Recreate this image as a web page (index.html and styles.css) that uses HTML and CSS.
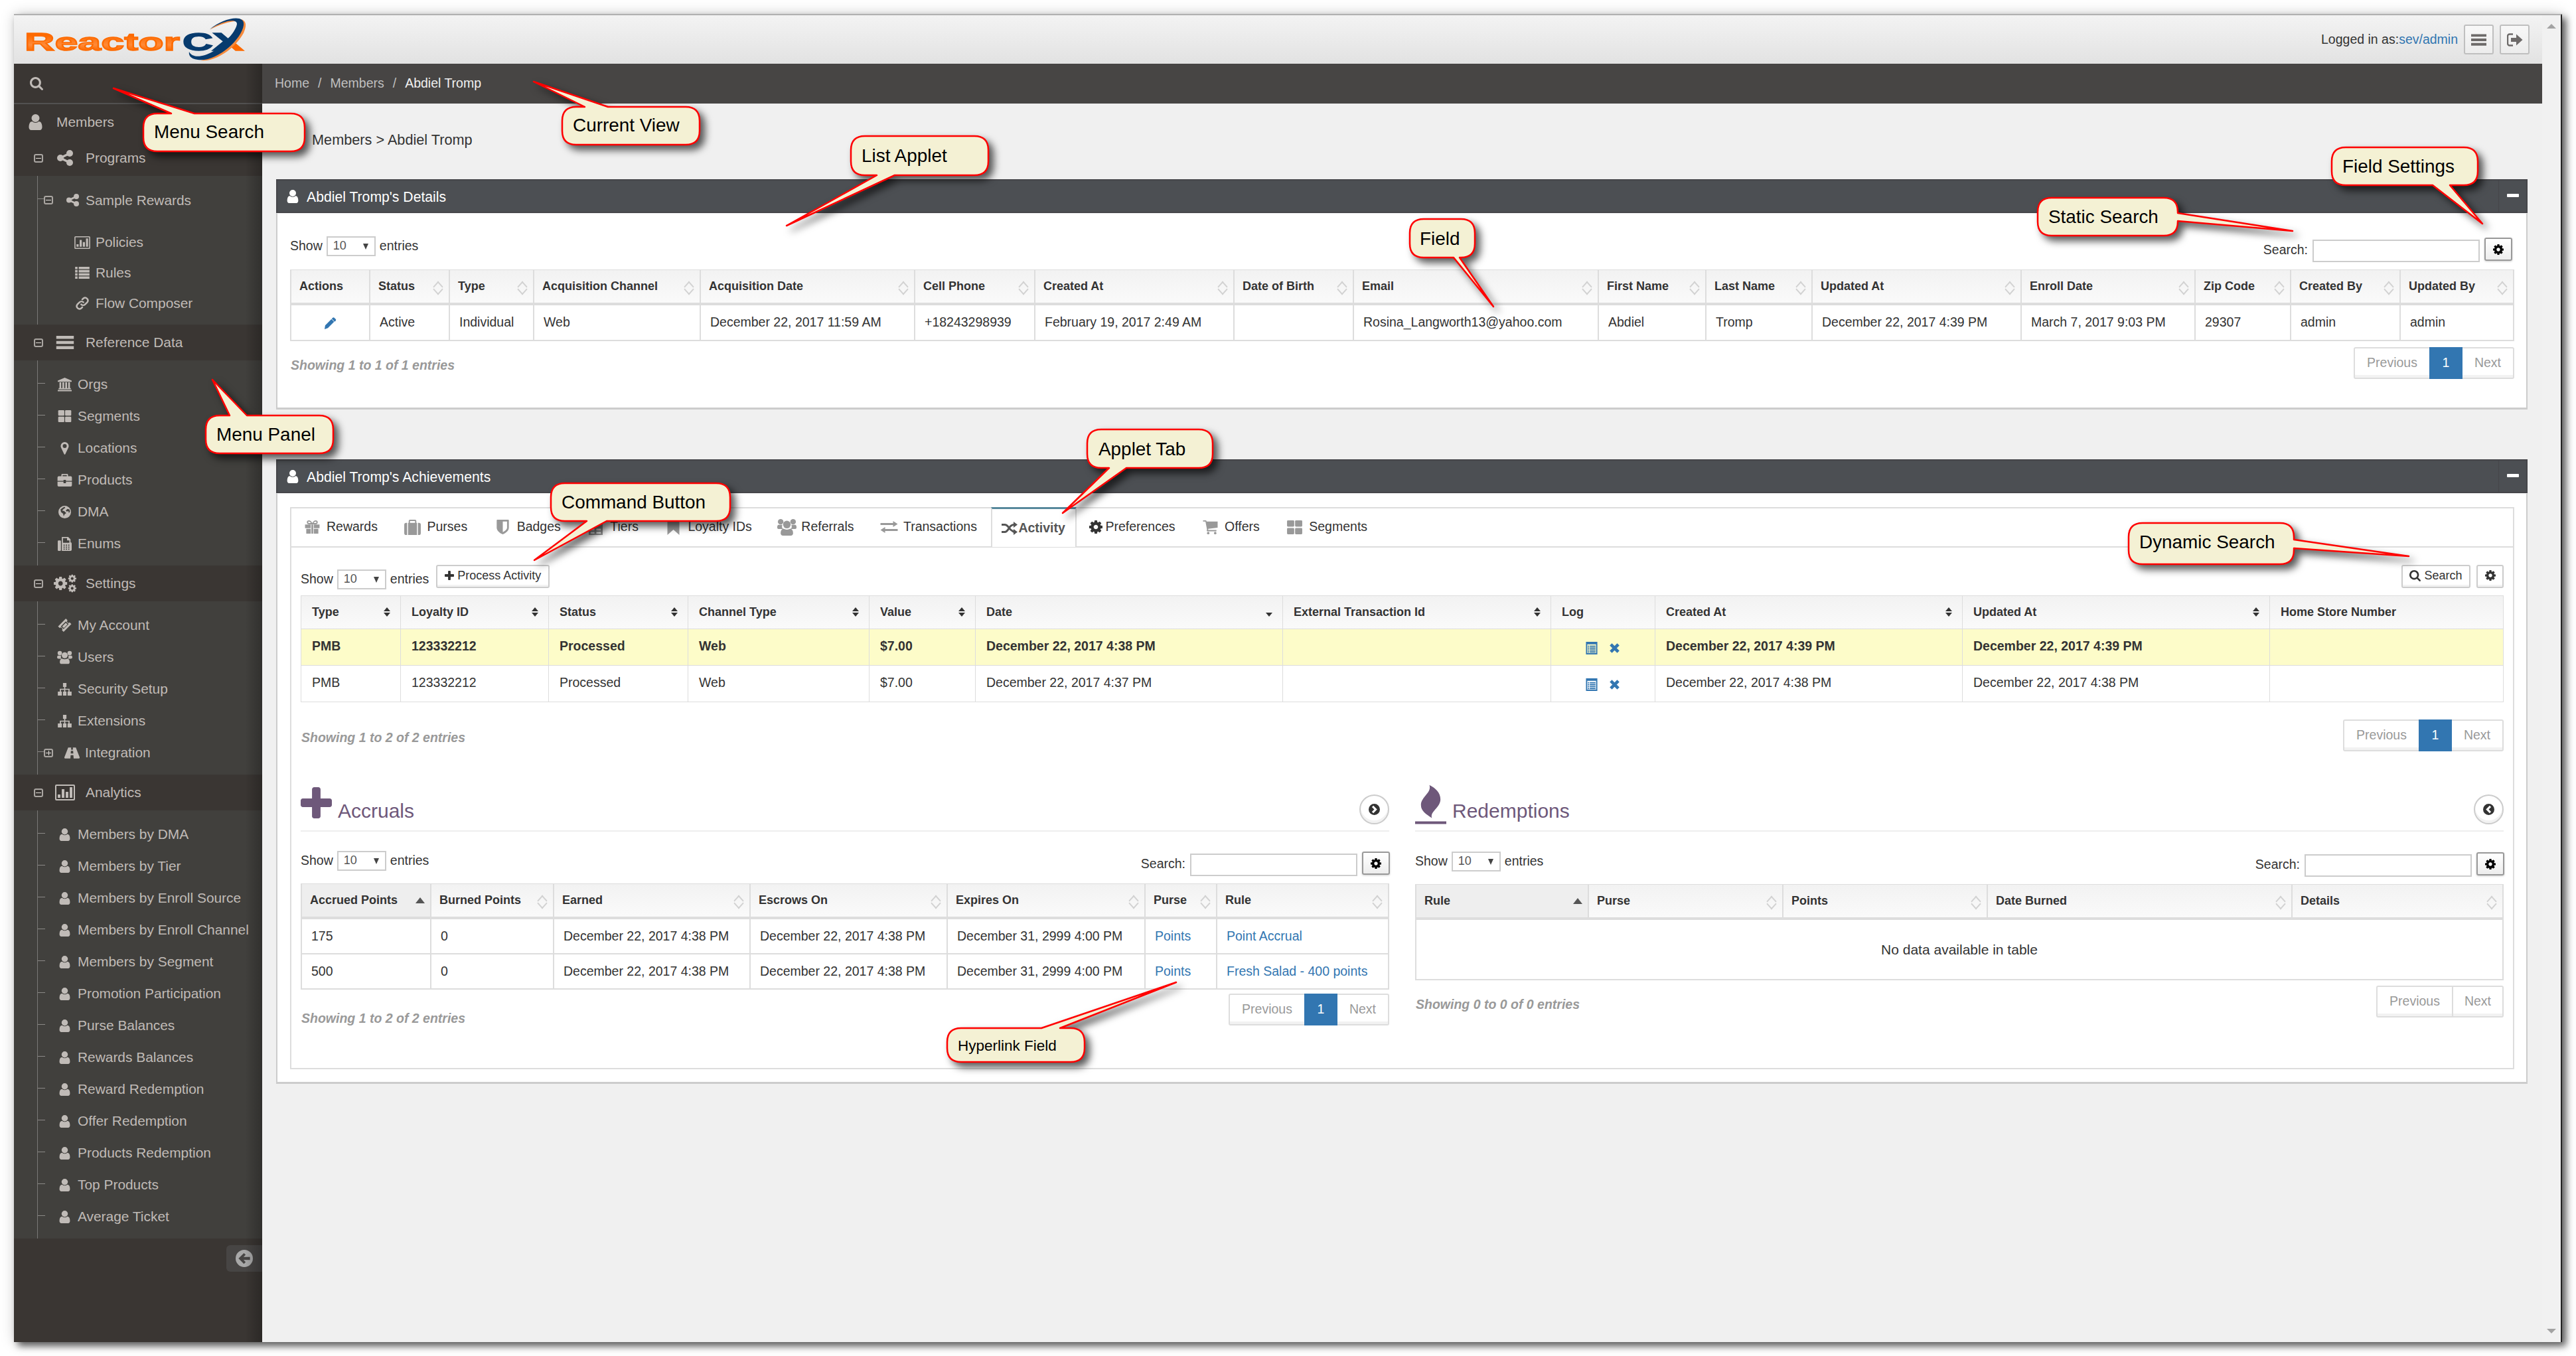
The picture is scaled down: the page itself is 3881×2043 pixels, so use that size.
FILE: index.html
```html
<!DOCTYPE html>
<html lang="en">
<head>
    <meta charset="UTF-8">
    <meta name="viewport" content="width=device-width, initial-scale=1.0">
    <title>ReactorCX - Abdiel Tromp</title>
    <link rel="stylesheet" href="styles.css">
</head>
<body>
    <!-- icon set -->
    <svg class="sprite" width="0" height="0">
        <symbol id="user" viewBox="256 128 1280 1536"><path d="M1536 1399q0 109-62.5 187t-150.5 78h-854q-88 0-150.5-78t-62.5-187q0-85 8.5-160.5t31.5-152 58.5-131 94-89 134.5-34.5q131 128 313 128t313-128q76 0 134.5 34.5t94 89 58.5 131 31.5 152 8.5 160.5zm-256-887q0 159-112.5 271.5t-271.5 112.5-271.5-112.5-112.5-271.5 112.5-271.5 271.5-112.5 271.5 112.5 112.5 271.5z"/></symbol>
        <symbol id="cog" viewBox="128 128 1536 1536"><path d="M1152 896q0-106-75-181t-181-75-181 75-75 181 75 181 181 75 181-75 75-181zm512-109v222q0 12-8 23t-20 13l-185 28q-19 54-39 91 35 50 107 138 10 12 10 25t-9 23q-27 37-99 108t-94 71q-12 0-26-9l-138-108q-44 23-91 38-16 136-29 186-7 28-36 28h-222q-14 0-24.5-8.5t-11.5-21.5l-28-184q-49-16-90-37l-141 107q-10 9-25 9-14 0-25-11-126-114-165-168-7-10-7-23 0-12 8-23 15-21 51-66.5t54-70.5q-27-50-41-99l-183-27q-13-2-21-12.5t-8-23.5v-222q0-12 8-23t19-13l186-28q14-46 39-92-40-57-107-138-10-12-10-24 0-10 9-23 26-36 98.5-107.5t94.5-71.5q13 0 26 10l138 107q44-23 91-38 16-136 29-186 7-28 36-28h222q14 0 24.5 8.5t11.5 21.5l28 184q49 16 90 37l142-107q9-9 24-9 13 0 25 10 129 119 165 170 7 8 7 22 0 12-8 23-15 21-51 66.5t-54 70.5q26 50 41 98l183 28q13 2 21 12.5t8 23.5z"/></symbol>
        <symbol id="plus" viewBox="192 128 1408 1408"><path d="M1600 736v192q0 40-28 68t-68 28h-416v416q0 40-28 68t-68 28h-192q-40 0-68-28t-28-68v-416h-416q-40 0-68-28t-28-68v-192q0-40 28-68t68-28h416v-416q0-40 28-68t68-28h192q40 0 68 28t28 68v416h416q40 0 68 28t28 68z"/></symbol>
        <symbol id="search" viewBox="64 128 1664 1664"><path d="M1216 832q0-185-131.5-316.5t-316.5-131.5-316.5 131.5-131.5 316.5 131.5 316.5 316.5 131.5 316.5-131.5 131.5-316.5zm512 832q0 52-38 90t-90 38q-54 0-90-38l-343-342q-179 124-399 124-143 0-273.5-55.5t-225-150-150-225-55.5-273.5 55.5-273.5 150-225 225-150 273.5-55.5 273.5 55.5 225 150 150 225 55.5 273.5q0 220-124 399l343 343q37 37 37 90z"/></symbol>
        <symbol id="share" viewBox="0 0 24 24"><circle cx="5" cy="12" r="5"/><circle cx="19" cy="5" r="5"/><circle cx="19" cy="19" r="5"/><path d="M5 12L19 5M5 12l14 7" stroke="currentColor" stroke-width="3.4"/></symbol>
        <symbol id="chart" viewBox="0 0 30 24"><path fill-rule="evenodd" d="M2 0h26a2 2 0 0 1 2 2v20a2 2 0 0 1-2 2H2a2 2 0 0 1-2-2V2a2 2 0 0 1 2-2zm0 2v20h26V2zM4 15h4v5H4zM10 7h4v13h-4zM16 11h4v9h-4zM22 4h4v16h-4z"/></symbol>
        <symbol id="list" viewBox="0 0 24 20"><path d="M0 0h4v4H0zM6 0h18v4H6zM0 5.4h4v4H0zM6 5.4h18v4H6zM0 10.8h4v4H0zM6 10.8h18v4H6zM0 16.2h4v4H0zM6 16.2h18v4H6z"/></symbol>
        <symbol id="link" viewBox="0 0 24 24"><g fill="none" stroke="currentColor" stroke-width="3" stroke-linecap="round"><path d="M10 14a5 5 0 0 0 7 0l4-4a5 5 0 0 0-7-7l-2 2"/><path d="M14 10a5 5 0 0 0-7 0l-4 4a5 5 0 0 0 7 7l2-2"/></g></symbol>
        <symbol id="bars" viewBox="0 0 24 20"><path d="M0 1h24v4H0zM0 8h24v4H0zM0 15h24v4H0z"/></symbol>
        <symbol id="bank" viewBox="0 0 24 24"><path d="M12 0l12 5v2H0V5zM3 8h3v10h2V8h3v10h2V8h3v10h2V8h3v10h1.500v2h-21v-2H3zM0 21h24v2.500H0z"/></symbol>
        <symbol id="thlarge" viewBox="0 0 24 22"><rect width="11.300" height="10" rx="1.500"/><rect x="12.700" width="11.300" height="10" rx="1.500"/><rect y="12" width="11.300" height="10" rx="1.500"/><rect x="12.700" y="12" width="11.300" height="10" rx="1.500"/></symbol>
        <symbol id="marker" viewBox="0 0 14 22"><path fill-rule="evenodd" d="M7 0a7 7 0 0 1 7 7c0 2-1 3.500-1.500 4.500L8 21a1.200 1.200 0 0 1-2 0L1.500 11.500C1 10.500 0 9 0 7a7 7 0 0 1 7-7zm0 3.500a3.500 3.500 0 1 0 0 7 3.500 3.500 0 0 0 0-7z"/></symbol>
        <symbol id="briefcase" viewBox="0 0 24 21"><path fill-rule="evenodd" d="M8 0h8a1.500 1.500 0 0 1 1.500 1.500V4H22a2 2 0 0 1 2 2v5.500H14V10h-4v1.500H0V6a2 2 0 0 1 2-2h4.500V1.500A1.500 1.500 0 0 1 8 0zm.500 2v2h7V2zM0 13h10v2.500h4V13h10v6a2 2 0 0 1-2 2H2a2 2 0 0 1-2-2z"/></symbol>
        <symbol id="globe" viewBox="0 0 24 24"><path fill-rule="evenodd" d="M12 0a12 12 0 1 1 0 24 12 12 0 0 1 0-24zM9 3L4 7l1 5 4 3 1 5 2-4 3-2-4-4-4-1 3-3 3-2-1-2zm8 3l-3 3 2 2 3-1 1 4 2-3-1-4z"/></symbol>
        <symbol id="fax" viewBox="0 0 24 24"><path fill-rule="evenodd" d="M1.500 6H4a1.500 1.500 0 0 1 1.500 1.500v15A1.500 1.500 0 0 1 4 24H1.500A1.500 1.500 0 0 1 0 22.500v-15A1.500 1.500 0 0 1 1.500 6zM7 0h11l4 4v5a2 2 0 0 1 2 2v11a2 2 0 0 1-2 2H7zm2 2v8h11V6h-4V2zm1 11v2h2v-2zm4 0v2h2v-2zm4 0v2h2v-2zm-8 3.500v2h2v-2zm4 0v2h2v-2zm4 0v2h2v-2zM10 20v2h2v-2zm4 0v2h2v-2zm4 0v2h2v-2z"/></symbol>
        <symbol id="ticket" viewBox="0 0 24 24"><path fill-rule="evenodd" d="M14 0l3 3a2.500 2.500 0 0 0 4 4l3 3-14 14-3-3a2.500 2.500 0 0 0-4-4l-3-3zm0 5l-9 9 5 5 9-9zm0 2.500l3 3-6.500 6.500-3-3z"/></symbol>
        <symbol id="group" viewBox="0 0 28 24"><circle cx="5" cy="4" r="4"/><circle cx="23" cy="4" r="4"/><circle cx="14" cy="8" r="5.500"/><path d="M1.500 8.500h6q-1.500 4 1 6H3q-3 0-3-2.500 0-3 1.500-3.500zM26.500 8.500h-6q1.500 4-1 6H25q3 0 3-2.500 0-3-1.500-3.500zM9 14q5 2.500 10 0 4 1 4 6.500 0 3.500-3.500 3.500h-11Q5 24 5 20.500 5 15 9 14z"/></symbol>
        <symbol id="sitemap" viewBox="0 0 24 22"><path d="M9 0h6v7h-2v3h7.500v5H24v7h-7v-7h1.500v-3H13v3h2v7H9v-7h2v-3H5.500v3H7v7H0v-7h3.500v-5H11V7H9z"/></symbol>
        <symbol id="road" viewBox="0 0 28 20"><path fill-rule="evenodd" d="M7 0h5.500l-.300 4h3.600l-.300-4H21l7 18q.500 2-1.500 2H17l-.500-6h-5L11 20H1.500q-2 0-1.500-2zM12 6l-.400 5h4.800L16 6z"/></symbol>
        <symbol id="cogs" viewBox="0 0 30 24"><use href="#cog" x="0" y="3" width="18" height="18"/><use href="#cog" x="19" y="0" width="11" height="11"/><use href="#cog" x="19" y="13" width="11" height="11"/></symbol>
        <symbol id="gift" viewBox="0 0 24 22"><path fill-rule="evenodd" d="M0 7h9.500v6H0zM14.500 7H24v6h-9.500zM10.500 7h3v15h-3zM2 14h7.500v8H2zM14.500 14H22v8h-7.500zM6.500 0Q9.500 0 12 4.500 14.500 0 17.500 0 21 0 21 3q0 3.500-4 3.500H7Q3 6.500 3 3q0-3 3.500-3zm0 2Q5 2 5 3.300 5 4.500 7 4.500h3Q8 2 6.500 2zm11 0Q16 2 14 4.500h3q2 0 2-1.200Q19 2 17.500 2z"/></symbol>
        <symbol id="suitcase" viewBox="0 0 26 24"><path fill-rule="evenodd" d="M9 0h8a2 2 0 0 1 2 2v3h1v19H6V5h1V2a2 2 0 0 1 2-2zm0 2v3h8V2zM3 5h1.500v19H3a3 3 0 0 1-3-3V8a3 3 0 0 1 3-3zM21.500 5H23a3 3 0 0 1 3 3v13a3 3 0 0 1-3 3h-1.500z"/></symbol>
        <symbol id="shield" viewBox="0 0 20 24"><path fill-rule="evenodd" d="M1 0h18a1 1 0 0 1 1 1v12c0 5-5 9-10 11C5 22 0 18 0 13V1a1 1 0 0 1 1-1zm9 3v17.500c3-1.500 7-4.500 7-7.500V3z"/></symbol>
        <symbol id="tiers" viewBox="0 0 22 24"><path fill-rule="evenodd" d="M0 0h22v24H0zM3 14v3h6v-3zm9 0v3h7v-3zm-9 5v3h6v-3zm9 0v3h7v-3z"/></symbol>
        <symbol id="bookmark" viewBox="0 0 18 23"><path d="M1 0h16a1 1 0 0 1 1 1v22l-9-8-9 8V1a1 1 0 0 1 1-1z"/></symbol>
        <symbol id="exchange" viewBox="0 0 26 18"><path d="M0 3h19V0l7 4.500L19 9V6H0zM26 15H7v3l-7-4.500L7 9v3h19z"/></symbol>
        <symbol id="random" viewBox="0 0 24 20"><path d="M0 4.500h4.500Q8 4.500 11 9t8 6.500M0 15.500h4.500Q8 15.500 11 10t8-5.500" fill="none" stroke="currentColor" stroke-width="3"/><path d="M18 0l6 4.500L18 9zM18 11l6 4.500-6 4.500z"/></symbol>
        <symbol id="cart" viewBox="0 0 24 24"><path d="M0 1h5l1 2h18v10L8.500 15v2H22v2H7q-1.500 0-.500-3L4 3H0z"/><circle cx="8.500" cy="22" r="2"/><circle cx="20" cy="22" r="2"/></symbol>
        <symbol id="pencil" viewBox="0 0 20 20"><path d="M1 13.500L11.500 3l4.500 4.500L5.500 18 0 20zM13 1.500q2-2 3.500-.500L18.500 3q1.500 1.500-.500 3.500l-1 1L12 2.500z"/></symbol>
        <symbol id="log" viewBox="0 0 18 20"><path fill-rule="evenodd" d="M0 0h18v20H0zM2 4v14h14V4zM3 6h2v2H3zM6 6h9v2H6zM3 9h2v2H3zM6 9h9v2H6zM3 12h2v2H3zM6 12h9v2H6zM3 15h2v2H3zM6 15h9v2H6z"/></symbol>
        <symbol id="times" viewBox="0 0 16 16"><path d="M2 2l12 12M14 2L2 14" stroke="currentColor" stroke-width="5"/></symbol>
        <symbol id="back" viewBox="0 0 24 24"><path fill-rule="evenodd" d="M12 0a12 12 0 1 1 0 24 12 12 0 0 1 0-24zM4 12l7.500 7.500 2.500-2.500-3-3h9v-4h-9l3-3-2.500-2.500z"/></symbol>
        <symbol id="next" viewBox="0 0 24 24"><path fill-rule="evenodd" d="M12 0a12 12 0 1 1 0 24 12 12 0 0 1 0-24zM10 4L7 7l5 5-5 5 3 3 8-8z"/></symbol>
        <symbol id="prev" viewBox="0 0 24 24"><path fill-rule="evenodd" d="M12 0a12 12 0 1 1 0 24 12 12 0 0 1 0-24zM14 4l3 3-5 5 5 5-3 3-8-8z"/></symbol>
        <symbol id="burn" viewBox="0 0 48 60"><path d="M22 0c4 12-13 18-13 31 0 9 8 14 17 20-4-10 13-16 13-29C39 12 32 5 22 0zM0 56h48v4H0z"/></symbol>
        <symbol id="signout" viewBox="0 0 24 20"><path d="M9 18.500H4a3 3 0 0 1-3-3v-11a3 3 0 0 1 3-3h5" fill="none" stroke="currentColor" stroke-width="2.400"/><path d="M6 7h8V1.500l9.500 8.500L14 18.500V13H6z"/></symbol>
    </svg>

    <div class="window">
        <header class="topbar">
            <svg class="logo" width="340" height="74" viewBox="0 0 340 74">
                <defs>
                    <linearGradient id="orange" x1="0" y1="0" x2="0" y2="1">
                        <stop offset=".25" stop-color="#fd6a00"/>
                        <stop offset=".6" stop-color="#ff8a38"/>
                        <stop offset=".8" stop-color="#fd6a00"/>
                    </linearGradient>
                    <linearGradient id="cx" x1="0" y1="0" x2="1" y2="1">
                        <stop offset=".5" stop-color="#073b6e"/>
                        <stop offset=".52" stop-color="#fd6a00"/>
                    </linearGradient>
                </defs>
                <text x="1" y="54" textLength="234" lengthAdjust="spacingAndGlyphs" fill="url(#orange)" stroke="#fd6a00" class="logo-text">Reactor</text>
                <text x="239" y="54" textLength="46" lengthAdjust="spacingAndGlyphs" fill="#073b6e" stroke="#073b6e" class="logo-text">C</text>
                <text x="284" y="54" textLength="47" lengthAdjust="spacingAndGlyphs" fill="url(#cx)" stroke="url(#cx)" class="logo-text">X</text>
                <path d="M280 23C302 5 337-1 334 18 331 40 293 73 266 69 290 66 326 34 327 14 326 6 302 11 280 23z" fill="#f58a3c"/>
                <path d="M280 22C300 5 334-2 331 16 328 38 290 72 262 68 250 67 248 60 249 56 254 66 270 64 284 56 304 44 320 24 321 14 321 5 300 9 280 22z" fill="#073b6e"/>
            </svg>
            <div class="user-info">
                <span>Logged in as:<a href="#">sev/admin</a></span>
                <button class="top-btn"><svg width="23" height="20"><use href="#bars"/></svg></button>
                <button class="top-btn"><svg width="24" height="20"><use href="#signout"/></svg></button>
            </div>
        </header>

        <div class="page">
            <nav class="sidebar">
                <div class="menu-search"><svg width="20" height="20"><use href="#search"/></svg></div>
                <div class="menu-head members"><svg width="23" height="24"><use href="#user"/></svg><span>Members</span></div>
                <div class="menu-head"><i class="toggle"></i><svg width="25" height="24"><use href="#share"/></svg><span>Programs</span></div>
                <ul class="submenu tree">
                    <li class="parent sample"><i class="toggle"></i><svg width="19" height="19"><use href="#share"/></svg>Sample Rewards</li>
                    <li class="leaf"><svg width="24" height="19"><use href="#chart"/></svg>Policies</li>
                    <li class="leaf"><svg width="24" height="18"><use href="#list"/></svg>Rules</li>
                    <li class="leaf"><svg width="24" height="20"><use href="#link"/></svg>Flow Composer</li>
                </ul>
                <div class="menu-head"><i class="toggle"></i><svg width="25" height="22"><use href="#bars"/></svg><span>Reference Data</span></div>
                <ul class="submenu">
                    <li><svg width="23" height="21"><use href="#bank"/></svg>Orgs</li>
                    <li><svg width="23" height="18"><use href="#thlarge"/></svg>Segments</li>
                    <li><svg width="23" height="19"><use href="#marker"/></svg>Locations</li>
                    <li><svg width="23" height="19"><use href="#briefcase"/></svg>Products</li>
                    <li><svg width="23" height="19"><use href="#globe"/></svg>DMA</li>
                    <li><svg width="23" height="21"><use href="#fax"/></svg>Enums</li>
                </ul>
                <div class="menu-head"><i class="toggle"></i><svg width="30" height="28"><use href="#cogs"/></svg><span>Settings</span></div>
                <ul class="submenu">
                    <li><svg width="23" height="20"><use href="#ticket"/></svg>My Account</li>
                    <li><svg width="23" height="21"><use href="#group"/></svg>Users</li>
                    <li><svg width="23" height="19"><use href="#sitemap"/></svg>Security Setup</li>
                    <li><svg width="23" height="19"><use href="#sitemap"/></svg>Extensions</li>
                    <li class="parent"><i class="toggle closed"></i><svg width="23" height="17"><use href="#road"/></svg>Integration</li>
                </ul>
                <div class="menu-head"><i class="toggle"></i><svg width="30" height="24"><use href="#chart"/></svg><span>Analytics</span></div>
                <ul class="submenu">
                    <li><svg width="23" height="19"><use href="#user"/></svg>Members by DMA</li>
                    <li><svg width="23" height="19"><use href="#user"/></svg>Members by Tier</li>
                    <li><svg width="23" height="19"><use href="#user"/></svg>Members by Enroll Source</li>
                    <li><svg width="23" height="19"><use href="#user"/></svg>Members by Enroll Channel</li>
                    <li><svg width="23" height="19"><use href="#user"/></svg>Members by Segment</li>
                    <li><svg width="23" height="19"><use href="#user"/></svg>Promotion Participation</li>
                    <li><svg width="23" height="19"><use href="#user"/></svg>Purse Balances</li>
                    <li><svg width="23" height="19"><use href="#user"/></svg>Rewards Balances</li>
                    <li><svg width="23" height="19"><use href="#user"/></svg>Reward Redemption</li>
                    <li><svg width="23" height="19"><use href="#user"/></svg>Offer Redemption</li>
                    <li><svg width="23" height="19"><use href="#user"/></svg>Products Redemption</li>
                    <li><svg width="23" height="19"><use href="#user"/></svg>Top Products</li>
                    <li><svg width="23" height="19"><use href="#user"/></svg>Average Ticket</li>
                </ul>
                <div class="collapse"><svg width="26" height="26"><use href="#back"/></svg></div>
            </nav>

            <main class="main">
                <div class="breadcrumb"><span>Home</span><span>/</span><span>Members</span><span>/</span><span class="here">Abdiel Tromp</span></div>
                <div class="content">
                    <h1 class="title">Members &gt; Abdiel Tromp</h1>

                    <section class="panel details">
                        <div class="panel-head"><svg width="18" height="20"><use href="#user"/></svg><span>Abdiel Tromp's Details</span><b class="minimize"></b></div>
                        <div class="panel-body">
                            <div class="toolbar">
                                <div class="length">Show <span class="select">10<i></i></span> entries</div>
                                <div class="filter"><label>Search:</label><input type="text"><button class="gear"><svg width="16" height="16"><use href="#cog"/></svg></button></div>
                            </div>
                            <table class="grid">
                                <colgroup><col class="w119"><col class="w120"><col class="w127"><col class="w251"><col class="w323"><col class="w181"><col class="w300"><col class="w180"><col class="w369"><col class="w162"><col class="w160"><col class="w315"><col class="w262"><col class="w144"><col class="w165"><col></colgroup>
                                <thead>
                                    <tr>
                                        <th>Actions</th>
                                        <th class="sort">Status</th>
                                        <th class="sort">Type</th>
                                        <th class="sort">Acquisition Channel</th>
                                        <th class="sort">Acquisition Date</th>
                                        <th class="sort">Cell Phone</th>
                                        <th class="sort">Created At</th>
                                        <th class="sort">Date of Birth</th>
                                        <th class="sort">Email</th>
                                        <th class="sort">First Name</th>
                                        <th class="sort">Last Name</th>
                                        <th class="sort">Updated At</th>
                                        <th class="sort">Enroll Date</th>
                                        <th class="sort">Zip Code</th>
                                        <th class="sort">Created By</th>
                                        <th class="sort">Updated By</th>
                                    </tr>
                                </thead>
                                <tbody>
                                    <tr>
                                        <td class="center"><svg class="blue" width="18" height="18"><use href="#pencil"/></svg></td>
                                        <td>Active</td>
                                        <td>Individual</td>
                                        <td>Web</td>
                                        <td>December 22, 2017 11:59 AM</td>
                                        <td>+18243298939</td>
                                        <td>February 19, 2017 2:49 AM</td>
                                        <td></td>
                                        <td>Rosina_Langworth13@yahoo.com</td>
                                        <td>Abdiel</td>
                                        <td>Tromp</td>
                                        <td>December 22, 2017 4:39 PM</td>
                                        <td>March 7, 2017 9:03 PM</td>
                                        <td>29307</td>
                                        <td>admin</td>
                                        <td>admin</td>
                                    </tr>
                                </tbody>
                            </table>
                            <div class="table-foot">
                                <em>Showing 1 to 1 of 1 entries</em>
                                <div class="pager"><span>Previous</span><b>1</b><span>Next</span></div>
                            </div>
                        </div>
                    </section>

                    <section class="panel achievements">
                        <div class="panel-head"><svg width="18" height="20"><use href="#user"/></svg><span>Abdiel Tromp's Achievements</span><b class="minimize"></b></div>
                        <div class="panel-body">
                            <div class="tab-box">
                                <ul class="tabs">
                                    <li><svg width="33" height="20"><use href="#gift"/></svg>Rewards</li>
                                    <li><svg width="33" height="23"><use href="#suitcase"/></svg>Purses</li>
                                    <li><svg width="33" height="22"><use href="#shield"/></svg>Badges</li>
                                    <li><svg width="33" height="23"><use href="#tiers"/></svg>Tiers</li>
                                    <li><svg width="33" height="23"><use href="#bookmark"/></svg>Loyalty IDs</li>
                                    <li><svg width="33" height="25"><use href="#group"/></svg>Referrals</li>
                                    <li><svg width="33" height="18"><use href="#exchange"/></svg>Transactions</li>
                                    <li class="active"><svg width="24" height="20"><use href="#random"/></svg>Activity</li>
                                    <li class="plain"><svg width="20" height="20"><use href="#cog"/></svg>Preferences</li>
                                    <li><svg width="33" height="22"><use href="#cart"/></svg>Offers</li>
                                    <li><svg width="33" height="21"><use href="#thlarge"/></svg>Segments</li>
                                </ul>
                                <div class="tab-pane">
                                    <div class="toolbar">
                                        <div class="length">Show <span class="select">10<i></i></span> entries</div>
                                        <button class="btn process"><svg width="14" height="14"><use href="#plus"/></svg>Process Activity</button>
                                        <div class="actions">
                                            <button class="btn find"><svg width="17" height="17"><use href="#search"/></svg>Search</button>
                                            <button class="btn cfg"><svg width="16" height="16"><use href="#cog"/></svg></button>
                                        </div>
                                    </div>
                                    <table class="grid activity">
                                        <colgroup><col class="w150"><col class="w223"><col class="w210"><col class="w273"><col class="w160"><col class="w463"><col class="w404"><col class="w157"><col class="w463"><col class="w463"><col></colgroup>
                                        <thead>
                                            <tr>
                                                <th class="sort">Type</th>
                                                <th class="sort">Loyalty ID</th>
                                                <th class="sort">Status</th>
                                                <th class="sort">Channel Type</th>
                                                <th class="sort">Value</th>
                                                <th class="sort desc">Date</th>
                                                <th class="sort">External Transaction Id</th>
                                                <th>Log</th>
                                                <th class="sort">Created At</th>
                                                <th class="sort">Updated At</th>
                                                <th>Home Store Number</th>
                                            </tr>
                                        </thead>
                                        <tbody>
                                            <tr class="selected">
                                                <td>PMB</td>
                                                <td>123332212</td>
                                                <td>Processed</td>
                                                <td>Web</td>
                                                <td>$7.00</td>
                                                <td>December 22, 2017 4:38 PM</td>
                                                <td></td>
                                                <td class="center"><svg class="blue" width="18" height="19"><use href="#log"/></svg><svg class="blue x" width="15" height="15"><use href="#times"/></svg></td>
                                                <td>December 22, 2017 4:39 PM</td>
                                                <td>December 22, 2017 4:39 PM</td>
                                                <td></td>
                                            </tr>
                                            <tr>
                                                <td>PMB</td>
                                                <td>123332212</td>
                                                <td>Processed</td>
                                                <td>Web</td>
                                                <td>$7.00</td>
                                                <td>December 22, 2017 4:37 PM</td>
                                                <td></td>
                                                <td class="center"><svg class="blue" width="18" height="19"><use href="#log"/></svg><svg class="blue x" width="15" height="15"><use href="#times"/></svg></td>
                                                <td>December 22, 2017 4:38 PM</td>
                                                <td>December 22, 2017 4:38 PM</td>
                                                <td></td>
                                            </tr>
                                        </tbody>
                                    </table>
                                    <div class="table-foot">
                                        <em>Showing 1 to 2 of 2 entries</em>
                                        <div class="pager"><span>Previous</span><b>1</b><span>Next</span></div>
                                    </div>

                                    <div class="split">
                                        <section class="accruals">
                                            <h2><svg width="47" height="47"><use href="#plus"/></svg>Accruals<button class="round"><svg width="17" height="17"><use href="#next"/></svg></button></h2>
                                            <div class="toolbar">
                                                <div class="length">Show <span class="select">10<i></i></span> entries</div>
                                                <div class="filter"><label>Search:</label><input type="text"><button class="gear"><svg width="16" height="16"><use href="#cog"/></svg></button></div>
                                            </div>
                                            <table class="grid">
                                                <colgroup><col class="w195"><col class="w185"><col class="w296"><col class="w297"><col class="w298"><col class="w108"><col></colgroup>
                                                <thead>
                                                    <tr>
                                                        <th class="sort asc">Accrued Points</th>
                                                        <th class="sort">Burned Points</th>
                                                        <th class="sort">Earned</th>
                                                        <th class="sort">Escrows On</th>
                                                        <th class="sort">Expires On</th>
                                                        <th class="sort">Purse</th>
                                                        <th class="sort">Rule</th>
                                                    </tr>
                                                </thead>
                                                <tbody>
                                                    <tr>
                                                        <td>175</td>
                                                        <td>0</td>
                                                        <td>December 22, 2017 4:38 PM</td>
                                                        <td>December 22, 2017 4:38 PM</td>
                                                        <td>December 31, 2999 4:00 PM</td>
                                                        <td><a href="#">Points</a></td>
                                                        <td><a href="#">Point Accrual</a></td>
                                                    </tr>
                                                    <tr>
                                                        <td>500</td>
                                                        <td>0</td>
                                                        <td>December 22, 2017 4:38 PM</td>
                                                        <td>December 22, 2017 4:38 PM</td>
                                                        <td>December 31, 2999 4:00 PM</td>
                                                        <td><a href="#">Points</a></td>
                                                        <td><a href="#">Fresh Salad - 400 points</a></td>
                                                    </tr>
                                                </tbody>
                                            </table>
                                            <div class="table-foot">
                                                <em>Showing 1 to 2 of 2 entries</em>
                                                <div class="pager"><span>Previous</span><b>1</b><span>Next</span></div>
                                            </div>
                                        </section>
                                        <section class="redemptions">
                                            <h2><svg width="47" height="60"><use href="#burn"/></svg>Redemptions<button class="round"><svg width="17" height="17"><use href="#prev"/></svg></button></h2>
                                            <div class="toolbar">
                                                <div class="length">Show <span class="select">10<i></i></span> entries</div>
                                                <div class="filter"><label>Search:</label><input type="text"><button class="gear"><svg width="16" height="16"><use href="#cog"/></svg></button></div>
                                            </div>
                                            <table class="grid">
                                                <colgroup><col class="w260"><col class="w293"><col class="w308"><col class="w459"><col></colgroup>
                                                <thead>
                                                    <tr>
                                                        <th class="sort asc">Rule</th>
                                                        <th class="sort">Purse</th>
                                                        <th class="sort">Points</th>
                                                        <th class="sort">Date Burned</th>
                                                        <th class="sort">Details</th>
                                                    </tr>
                                                </thead>
                                                <tbody>
                                                    <tr><td colspan="5" class="empty">No data available in table</td></tr>
                                                </tbody>
                                            </table>
                                            <div class="table-foot">
                                                <em>Showing 0 to 0 of 0 entries</em>
                                                <div class="pager"><span>Previous</span><span>Next</span></div>
                                            </div>
                                        </section>
                                    </div>
                                </div>
                            </div>
                        </div>
                    </section>
                </div>
            </main>
            <div class="scroll-space"></div>
        </div>
        <div class="scrollbar"><i class="up"></i><i class="down"></i></div>
    </div>

    <!-- callouts over the screen -->
    <svg class="callouts" width="3881" height="2043" viewBox="0 0 3881 2043">
        <g class="bubbles">
            <path d="M237 171H258L171 133 293 171H438Q459 171 459 192V207Q459 228 438 228H237Q216 228 216 207V192Q216 171 237 171z"/>
            <path d="M868 161H881L804 123 916 161H1033Q1054 161 1054 182V197Q1054 218 1033 218H868Q847 218 847 197V182Q847 161 868 161z"/>
            <path d="M1303 205H1468Q1489 205 1489 226V243Q1489 264 1468 264H1348L1185 340 1321 264H1303Q1282 264 1282 243V226Q1282 205 1303 205z"/>
            <path d="M2145 330H2201Q2222 330 2222 351V367Q2222 388 2201 388H2199L2250 462 2190 388H2145Q2124 388 2124 367V351Q2124 330 2145 330z"/>
            <path d="M3091 298H3260Q3281 298 3281 319V321L3454 348 3281 333V334Q3281 355 3260 355H3091Q3070 355 3070 334V319Q3070 298 3091 298z"/>
            <path d="M3534 222H3712Q3733 222 3733 243V258Q3733 279 3712 279H3691L3740 337 3665 279H3534Q3513 279 3513 258V243Q3513 222 3534 222z"/>
            <path d="M331 626H346L320 572 372 626H481Q502 626 502 647V662Q502 683 481 683H331Q310 683 310 662V647Q310 626 331 626z"/>
            <path d="M851 728H1079Q1100 728 1100 749V764Q1100 785 1079 785H914L805 844 884 785H851Q830 785 830 764V749Q830 728 851 728z"/>
            <path d="M1659 647H1806Q1827 647 1827 668V684Q1827 705 1806 705H1697L1601 773 1671 705H1659Q1638 705 1638 684V668Q1638 647 1659 647z"/>
            <path d="M3228 788H3435Q3456 788 3456 809V813L3629 838 3456 826V829Q3456 850 3435 850H3228Q3207 850 3207 829V809Q3207 788 3228 788z"/>
            <path d="M1448 1549H1569L1772 1480 1597 1549H1613Q1634 1549 1634 1570V1579Q1634 1600 1613 1600H1448Q1427 1600 1427 1579V1570Q1427 1549 1448 1549z"/>
        </g>
        <g class="labels">
            <text x="232" y="208">Menu Search</text>
            <text x="863" y="198">Current View</text>
            <text x="1298" y="244">List Applet</text>
            <text x="2139" y="369">Field</text>
            <text x="3086" y="336">Static Search</text>
            <text x="3529" y="260">Field Settings</text>
            <text x="326" y="664">Menu Panel</text>
            <text x="846" y="766">Command Button</text>
            <text x="1655" y="686">Applet Tab</text>
            <text x="3223" y="826">Dynamic Search</text>
            <text x="1443" y="1583" class="small">Hyperlink Field</text>
        </g>
    </svg>
</body>
</html>
```

FILE: styles.css
```css
* {
    box-sizing: border-box;
}
body {
    margin: 0;
    padding: 21px;
    background: #fff;
    color: #333;
    font: 19.5px/1.3 "Liberation Sans", Arial, sans-serif;
    overflow: hidden;
}
svg {
    fill: currentColor;
    flex: none;
}
a {
    color: #3276b1;
    text-decoration: none;
}
ul {
    margin: 0;
    padding: 0;
    list-style: none;
}
button {
    font-family: inherit;
    padding: 0;
}
.sprite {
    position: absolute;
}
.window {
    position: relative;
    width: 3839px;
    height: 2001px;
    background: #f0f0f0;
    border-top: 2px solid #b0b0b0;
    border-right: 2px solid #222;
    box-shadow: 6px 6px 10px rgba(0, 0, 0, .6), 0 0 20px rgba(0, 0, 0, .18);
}

/* top bar */
.topbar {
    display: flex;
    justify-content: space-between;
    align-items: flex-start;
    width: 3809px;
    height: 73px;
    padding: 0 19px 0 15px;
    background: linear-gradient(#f3f3f3, #e2e2e2);
}
.logo {
    overflow: visible;
    margin-top: -1px;
}
.logo-text {
    font-weight: bold;
    font-size: 37px;
    stroke-width: 1.500px;
}
.user-info {
    display: flex;
    align-items: center;
    gap: 9px;
    padding-top: 14px;
}
.top-btn {
    display: flex;
    align-items: center;
    justify-content: center;
    width: 45px;
    height: 45px;
    border: 2px solid #bfbfbf;
    border-radius: 3px;
    background: linear-gradient(#f8f8f8, #ececec);
    color: #6d6a69;
}
.page {
    display: flex;
    height: 1926px;
}

/* sidebar */
.sidebar {
    position: relative;
    width: 374px;
    background: #3a3633;
    color: #c0bbb7;
    font-size: 20.900px;
}
.sidebar::after {
    content: "";
    position: absolute;
    top: 0;
    right: 0;
    bottom: 0;
    width: 26px;
    background: linear-gradient(to right, rgba(0, 0, 0, 0), rgba(0, 0, 0, .25));
}
.menu-search {
    display: flex;
    align-items: center;
    height: 61px;
    padding-left: 24px;
    border-bottom: 2px solid #525151;
}
.menu-head {
    display: flex;
    align-items: center;
    height: 54px;
    padding-left: 30px;
}
.menu-head svg {
    width: 34px;
    margin-left: 16px;
    margin-right: 14px;
}
.menu-head.members {
    padding-left: 21px;
}
.menu-head.members svg {
    width: 23px;
    margin: 0 20px 0 0;
}
.toggle {
    position: relative;
    width: 14px;
    height: 13px;
    border: 2px solid #aaa6a2;
    border-radius: 3px;
}
.toggle::before {
    content: "";
    position: absolute;
    left: 1px;
    right: 1px;
    top: 4px;
    height: 1px;
    background: #e0dcd8;
}
.toggle.closed::after {
    content: "";
    position: absolute;
    top: 1px;
    bottom: 1px;
    left: 4.500px;
    width: 1px;
    background: #e0dcd8;
}
.submenu {
    position: relative;
    padding: 11px 0 10px;
    background: #41403d;
}
.submenu::before {
    content: "";
    position: absolute;
    left: 35px;
    top: 0;
    bottom: 0;
    width: 1px;
    background: #7a7977;
}
.submenu li {
    position: relative;
    display: flex;
    align-items: center;
    height: 48px;
    padding: 2px 0 0 65px;
}
.submenu li svg {
    margin-right: 8px;
}
.submenu li::before {
    content: "";
    position: absolute;
    left: 36px;
    top: 23px;
    width: 11px;
    height: 1px;
    background: #8b8987;
}
.submenu .parent {
    padding-left: 45px;
}
.submenu .parent .toggle {
    margin-right: 17px;
}
.submenu .sample {
    height: 49px;
    margin-bottom: 16px;
}
.submenu .sample .toggle {
    margin-right: 20px;
}
.submenu .sample svg {
    margin-right: 10px;
}
.submenu .leaf {
    height: 46px;
    padding-left: 91px;
}
.submenu .leaf::before {
    display: none;
}
.collapse {
    display: flex;
    align-items: center;
    width: 54px;
    height: 40px;
    margin: 10px 0 0 auto;
    padding-left: 14px;
    border-radius: 6px 0 0 6px;
    background: #474544;
    color: #a8a8a8;
}

/* main column */
.main {
    width: 3435px;
}
.breadcrumb {
    display: flex;
    align-items: center;
    gap: 13px;
    height: 60px;
    padding-left: 19px;
    background: #474544;
    color: #bfbfbf;
}
.breadcrumb .here {
    color: #f0f0f0;
}
.content {
    padding: 0 22px 0 21px;
}
.title {
    margin: 0;
    height: 114px;
    padding: 40px 0 0 54px;
    font-size: 21.700px;
    font-weight: normal;
    line-height: 30px;
}
.panel {
    margin-bottom: 75px;
}
.panel-head {
    display: flex;
    align-items: center;
    height: 51px;
    padding-left: 14px;
    border: 2px solid #454549;
    background: #4c4f53;
    color: #fff;
    font-size: 21.200px;
}
.panel-head span {
    margin-left: 12px;
    padding-top: 2px;
}
.minimize {
    display: flex;
    align-items: center;
    justify-content: center;
    width: 42px;
    height: 100%;
    margin-left: auto;
    border-left: 1px solid #454549;
}
.minimize::before {
    content: "";
    width: 18px;
    height: 5px;
    margin-bottom: 3px;
    border-radius: 1px;
    background: #fff;
}
.panel-body {
    padding: 0 18px 0 19px;
    border: 2px solid #ccc;
    border-top: 1px solid #f4f4f4;
    border-bottom: 3px solid #ccc;
    background: #fff;
}
.details .panel-body {
    height: 296px;
}
.achievements .panel-body {
    height: 890px;
    padding-top: 20px;
}

/* table toolbars */
.toolbar {
    display: flex;
    justify-content: space-between;
    align-items: flex-start;
    height: 84px;
    padding-top: 35px;
}
.length {
    display: flex;
    align-items: center;
    height: 28px;
    gap: 6px;
}
.select {
    display: flex;
    align-items: center;
    justify-content: space-between;
    width: 74px;
    height: 30px;
    padding: 0 9px 0 8px;
    border: 2px solid #ccc;
    background: #fff;
    color: #555;
    font-size: 18px;
}
.select i {
    border: 4.500px solid transparent;
    border-top: 9px solid #444;
    border-bottom: 0;
}
.filter {
    display: flex;
    align-items: flex-start;
}
.filter label {
    margin: 6px 7px 0 0;
    line-height: 24px;
}
.filter input {
    width: 252px;
    height: 34px;
    margin: 3px 7px 0 0;
    border: 2px solid #ccc;
    background: #fff;
}
.gear {
    display: flex;
    align-items: center;
    justify-content: center;
    width: 42px;
    height: 35px;
    border: 2px solid #999;
    border-radius: 3px;
    background: linear-gradient(#fff, #ededed);
    box-shadow: 0 1px 3px rgba(0, 0, 0, .2);
    color: #000;
}
.details .filter {
    margin: 1px 3px 0 0;
}
.btn {
    display: flex;
    align-items: center;
    justify-content: center;
    gap: 5px;
    height: 35px;
    border: 2px solid #ccc;
    border-radius: 3px;
    background: #fff;
    box-shadow: inset 0 -3px 0 rgba(0, 0, 0, .05);
    color: #333;
    font-size: 18px;
    padding-bottom: 3px;
}

/* tables */
.grid {
    width: 100%;
    table-layout: fixed;
    border-collapse: separate;
    border-spacing: 0;
    border-right: 2px solid #ddd;
    border-bottom: 2px solid #ddd;
}
.grid th, .grid td {
    text-align: left;
    white-space: nowrap;
    border-left: 2px solid #ddd;
}
.grid th {
    position: relative;
    height: 54px;
    padding: 0 0 0 12px;
    border-top: 1px solid #ddd;
    border-bottom: 4px solid #ddd;
    background: linear-gradient(#f2f2f2, #fafafa);
    font-size: 18px;
}
.grid td {
    height: 51px;
    padding: 0 0 0 14px;
}
.grid tr + tr td {
    height: 53px;
    border-top: 2px solid #ddd;
}
.grid .center {
    padding: 0;
    text-align: center;
}
.grid td svg {
    vertical-align: middle;
}
.blue {
    color: #3276b1;
}
.details .grid td {
    height: 52px;
}
.sort::before, .sort::after {
    content: "";
    position: absolute;
    right: 10px;
    width: 10px;
    height: 10px;
    border: solid #d2d2d2;
    border-width: 2px 0 0 2px;
    transform: scaleX(.9) rotate(45deg);
}
.sort::before {
    top: 19px;
}
.sort::after {
    bottom: 14px;
    transform: scaleX(.9) rotate(225deg);
}
.grid .asc {
    background: #eee;
}
.asc::before {
    top: 20px;
    width: 0;
    height: 0;
    border: 7px solid transparent;
    border-top: 0;
    border-bottom: 9px solid #555;
    transform: none;
    right: 8px;
}
.asc::after {
    display: none;
}
.activity th {
    height: 50px;
    padding-left: 16px;
    border-bottom: 0;
}
.activity td, .activity tr + tr td {
    height: 55px;
    padding: 0 0 2px 16px;
    border-top: 1px solid #ddd;
}
.activity th, .activity td {
    border-left-width: 1px;
}
.activity {
    border-right-width: 1px;
    border-bottom-width: 1px;
}
.activity .sort::before, .activity .sort::after {
    right: 15px;
    width: 0;
    height: 0;
    border: 5.500px solid transparent;
    transform: none;
}
.activity .sort::before {
    top: 17px;
    border-top: 0;
    border-bottom: 6px solid #333;
}
.activity .sort::after {
    bottom: 18px;
    border-bottom: 0;
    border-top: 6px solid #333;
}
.activity .desc::before {
    display: none;
}
.selected td {
    background: #fdfcc9;
    font-weight: bold;
}
.grid.activity .center {
    padding: 0 1px 0 0;
}
.x {
    margin-left: 18px;
}
.grid .empty {
    height: 89px;
    padding: 0;
    text-align: center;
    font-size: 21px;
}

/* info line and pager */
.table-foot {
    display: flex;
    justify-content: space-between;
    align-items: flex-start;
    padding-top: 9px;
}
.table-foot em {
    margin: 15px 0 0 1px;
    color: #999;
    font-weight: bold;
}
.pager {
    display: flex;
    height: 48px;
    border: 2px solid #ddd;
    border-radius: 3px;
    box-shadow: inset 0 -4px 0 rgba(0, 0, 0, .05);
    color: #999;
    line-height: 42px;
}
.pager span {
    width: 112px;
    text-align: center;
}
.pager span:last-child {
    width: 76px;
}
.pager b {
    width: 50px;
    height: 48px;
    margin: -2px 0;
    background: #3276b1;
    color: #fff;
    font-weight: normal;
    line-height: 46px;
    text-align: center;
}
.pager span + span {
    border-left: 2px solid #ddd;
}

/* tabs */
.tab-box {
    height: 847px;
    border: 2px solid #ddd;
}
.tabs {
    display: flex;
    height: 59px;
    border-bottom: 2px solid #ddd;
}
.tabs li {
    display: flex;
    align-items: center;
    padding: 0 21.500px 1px 15px;
}
.tabs li svg {
    margin-right: 5px;
    color: #999;
}
.tabs .active {
    width: 129px;
    height: 60px;
    margin-top: -2px;
    padding: 0 0 0 14px;
    border-top: 3px solid #57889c;
    border-left: 2px solid #ddd;
    border-right: 2px solid #ddd;
    background: #fff;
    color: #555;
    font-weight: bold;
}
.tabs .active svg {
    margin-right: 1px;
    color: #555;
}
.tabs .plain {
    padding-left: 19px;
}
.tabs .plain svg {
    margin-right: 4px;
    color: #333;
}
.tab-pane {
    padding: 0 14px;
}
.tab-pane > .toolbar {
    height: 72px;
    padding-top: 26px;
}
.tab-pane > .toolbar .length {
    margin-top: 8px;
}
.process {
    width: 171px;
    margin-left: 11px;
}
.actions {
    display: flex;
    gap: 9px;
    margin-left: auto;
}
.find {
    width: 104px;
}
.cfg {
    width: 41px;
}
.tab-pane > .table-foot {
    padding-top: 26px;
}
.tab-pane > .table-foot em {
    margin-top: 15px;
}

/* accruals and redemptions */
.split {
    display: flex;
    gap: 39px;
}
.accruals {
    width: 1640px;
}
.redemptions {
    flex: 1;
}
.split h2 {
    display: flex;
    align-items: flex-end;
    height: 121px;
    margin: 0;
    padding-bottom: 9px;
    border-bottom: 2px solid #eee;
    color: #6e587a;
    font-size: 30px;
    font-weight: normal;
    line-height: 41px;
}
.split h2 svg {
    margin-right: 9px;
}
.accruals h2 > svg {
    margin-bottom: 9px;
}
.round {
    display: flex;
    align-items: center;
    justify-content: center;
    width: 45px;
    height: 45px;
    margin-left: auto;
    border: 2px solid #ccc;
    border-radius: 50%;
    background: #fff;
    box-shadow: inset 0 -4px 0 rgba(0, 0, 0, .05);
    color: #333;
}
.split h2 .round svg {
    margin: 0;
}
.split .toolbar {
    height: 78px;
    padding-top: 30px;
}
.split .filter {
    margin-right: -1px;
}
.redemptions .toolbar {
    height: 79px;
    padding-top: 31px;
}
.split .table-foot {
    padding-top: 6px;
}
.redemptions .table-foot {
    padding-top: 8px;
}
.split .table-foot em {
    margin-top: 25px;
}
.redemptions .table-foot em {
    margin-top: 16px;
}

/* column widths */
.w108 { width: 108px; }
.w119 { width: 119px; }
.w120 { width: 120px; }
.w127 { width: 127px; }
.w144 { width: 144px; }
.w150 { width: 150px; }
.w157 { width: 157px; }
.w160 { width: 160px; }
.w162 { width: 162px; }
.w165 { width: 165px; }
.w180 { width: 180px; }
.w181 { width: 181px; }
.w185 { width: 185px; }
.w195 { width: 195px; }
.w210 { width: 210px; }
.w223 { width: 223px; }
.w251 { width: 251px; }
.w260 { width: 260px; }
.w262 { width: 262px; }
.w273 { width: 273px; }
.w293 { width: 293px; }
.w296 { width: 296px; }
.w297 { width: 297px; }
.w298 { width: 298px; }
.w300 { width: 300px; }
.w308 { width: 308px; }
.w315 { width: 315px; }
.w323 { width: 323px; }
.w369 { width: 369px; }
.w404 { width: 404px; }
.w459 { width: 459px; }
.w463 { width: 463px; }

/* browser scrollbar */
.scrollbar {
    position: absolute;
    top: 0;
    right: 0;
    bottom: 0;
    display: flex;
    flex-direction: column;
    justify-content: space-between;
    align-items: center;
    width: 28px;
    padding: 13px 0;
    background: #f1f1f1;
}
.scrollbar i {
    border: 7px solid transparent;
}
.scrollbar .up {
    border-top: 0;
    border-bottom-color: #a3a3a3;
}
.scrollbar .down {
    border-bottom: 0;
    border-top-color: #a3a3a3;
}

/* callouts */
.callouts {
    position: absolute;
    top: 0;
    left: 0;
}
.bubbles {
    fill: #f4f1d4;
    stroke: #f00;
    stroke-width: 2.500px;
    stroke-linejoin: round;
    filter: drop-shadow(7px 7px 6px rgba(0, 0, 0, .65));
}
.labels {
    fill: #000;
    font-size: 27.900px;
}
.labels .small {
    font-size: 22.500px;
}
```
